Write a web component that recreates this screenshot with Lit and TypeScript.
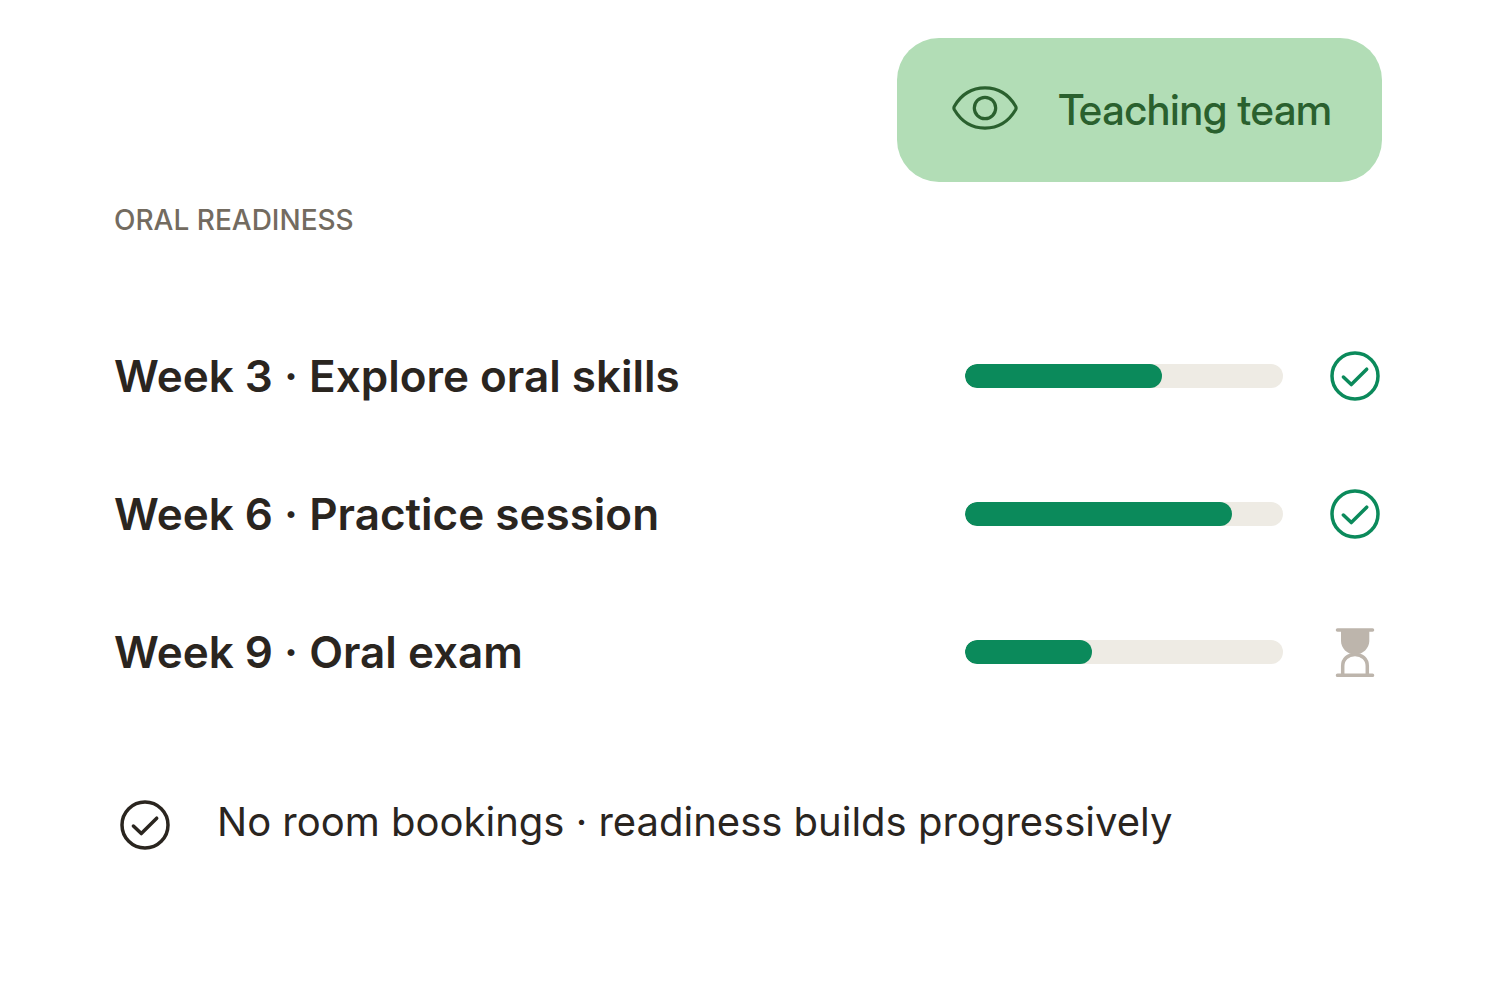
import { LitElement, html, css } from 'lit';
import { customElement } from 'lit/decorators.js';

interface Milestone { id: string; label: string; value: number; done: boolean; }

const milestones: Milestone[] = [
  { id: 'w3', label: 'Week 3 · Explore oral skills', value: 62, done: true },
  { id: 'w6', label: 'Week 6 · Practice session', value: 84, done: true },
  { id: 'w9', label: 'Week 9 · Oral exam', value: 40, done: false },
];

const check = html`<svg class="icon" viewBox="0 0 50 50" aria-hidden="true">
  <circle cx="25" cy="25" r="23"></circle><path d="M13.400 26L21.300 33.600L36.700 18.200"></path></svg>`;

const hourglass = html`<svg class="icon" viewBox="0 0 50 50" aria-hidden="true">
  <path d="M7.500 3H42.500M7.500 48.300H42.500M12.700 48V39C12.700 32 18 27.500 25 27.500C32 27.500 37.300 32 37.300 39V48"></path>
  <path class="solid" d="M11 3H39.300V14C39.300 21 33 27.500 25.150 27.500C17 27.500 11 21 11 14Z"></path></svg>`;

@customElement('app-root')
export class AppRoot extends LitElement {
  static styles = css`
    :host { display: block; min-height: 100vh; background: #fff; color: #2a251f; font-family: Inter, "Liberation Sans", sans-serif; }
    .panel { padding: 38px 118px 0 114px; display: flex; flex-direction: column; }
    .team { align-self: flex-end; display: flex; align-items: center; gap: 40px; box-sizing: border-box; height: 144px; padding: 0 50px 0 55px; border: 0; border-radius: 42px; background: #b2ddb6; color: #2a602e; font-family: "Inter Display", Inter, sans-serif; font-weight: 500; font-size: 42px; line-height: 52px; }
    .eye { width: 66px; height: 46px; margin-bottom: 4px; fill: none; stroke: currentColor; stroke-width: 3.2; stroke-linejoin: round; }
    .title { margin: 20px 0 0; font-size: 28px; line-height: 36px; font-weight: 500; color: #736b60; }
    .list { list-style: none; margin: 69px 0 0; padding: 0; display: flex; flex-direction: column; }
    .row { display: flex; align-items: center; height: 138px; padding-right: 2px; }
    .label { flex: 1; font-size: 44px; line-height: 56px; font-weight: 600; }
    .track { width: 318px; height: 24px; border-radius: 12px; background: #eeebe4; overflow: hidden; margin-right: 47px; }
    .fill { height: 100%; border-radius: 12px; background: #0b8a5b; }
    .icon { display: block; flex: none; width: 50px; height: 50px; fill: none; stroke: currentColor; stroke-width: 3.5; stroke-linecap: round; stroke-linejoin: round; }
    .done { color: #0b8a5b; }
    .pending { color: #bdb5ac; }
    .solid { fill: currentColor; stroke: none; }
    .note { display: flex; align-items: flex-end; gap: 47px; margin: 73px 0 0; padding-left: 6px; font-size: 40px; line-height: 56px; }
  `;

  render() {
    return html`<main class="panel">
      <button class="team" type="button">
        <svg class="eye" viewBox="0 0 66 46" aria-hidden="true"><path d="M2.400 21.200C9 10 19.500 2.900 33 2.900C46.500 2.900 57 10 63.600 21.200Q64.600 23 63.600 24.800C57 36 46.500 43.100 33 43.100C19.500 43.100 9 36 2.400 24.800Q1.400 23 2.400 21.200Z"></path><circle cx="33" cy="23" r="10.700"></circle></svg>
        <span>Teaching team</span>
      </button>
      <h2 class="title">ORAL READINESS</h2>
      <ul class="list">
        ${milestones.map((m) => html`<li class="row">
          <span class="label" id=${m.id}>${m.label}</span>
          <div class="track" role="progressbar" aria-labelledby=${m.id} aria-valuenow=${m.value} aria-valuemin="0" aria-valuemax="100"><div class="fill" style="width:${m.value}%"></div></div>
          <span class=${m.done ? 'done' : 'pending'}>${m.done ? check : hourglass}</span>
        </li>`)}
      </ul>
      <p class="note">${check}<span>No room bookings · readiness builds progressively</span></p>
    </main>`;
  }
}
